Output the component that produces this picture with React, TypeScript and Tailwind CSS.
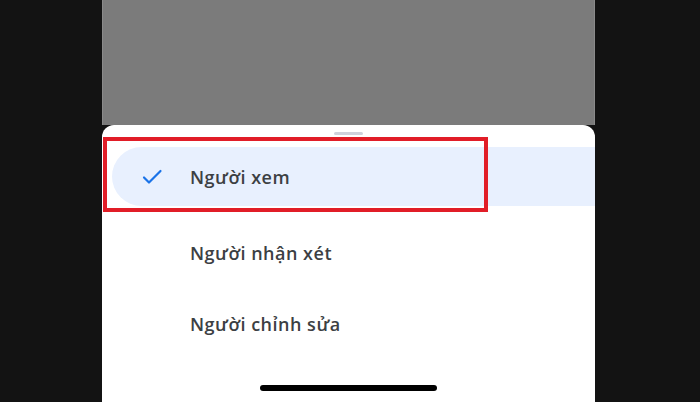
import React from "react";

const roles = [
  { label: "Người xem", selected: true },
  { label: "Người nhận xét", selected: false },
  { label: "Người chỉnh sửa", selected: false },
];

const Check = () => (
  <svg width="24" height="24" viewBox="0 0 24 24" fill="none">
    <path d="M4 12.5l5 5L20.5 6" stroke="#1a73e8" strokeWidth="2.2" strokeLinecap="round" strokeLinejoin="round" />
  </svg>
);

export default function App() {
  return (
    <div className="w-[700px] h-[402px] bg-[#131313] flex pl-[102px] font-['Open_Sans',sans-serif] overflow-hidden">
      <div className="relative w-[493px] h-full flex flex-col">
        {/* dimmed document behind the sheet */}
        <div className="h-[125px] bg-[#7b7b7b] border-x border-[#8a8a8a]" />

        {/* bottom sheet */}
        <div className="flex-1 bg-white rounded-t-[12px] flex flex-col">
          <div className="flex justify-center pt-[7px]">
            <div className="w-[29px] h-[3px] rounded-full bg-[#cfd2dc]" />
          </div>

          <div className="flex flex-col mt-[12px]">
            {roles.map((r, i) => (
              <div
                key={r.label}
                className={
                  r.selected
                    ? "ml-[10px] h-[59px] rounded-l-full bg-[#e8f0fe] flex items-center"
                    : i === 1
                      ? "ml-[10px] h-[71px] flex items-center mt-[11px]"
                      : "ml-[10px] h-[71px] flex items-center"
                }
              >
                <div className="w-[78px] flex justify-center pl-[2px]">{r.selected && <Check />}</div>
                <span className="text-[18px] font-semibold text-[#3c4043] tracking-[0.5px] pt-[1px]">{r.label}</span>
              </div>
            ))}
          </div>

          <div className="mt-auto mb-[11px] flex justify-center">
            <div className="w-[177px] h-[6px] rounded-full bg-black" />
          </div>
        </div>

        {/* red annotation frame */}
        <div className="absolute left-[1px] top-[137px] w-[385px] h-[75px] border-[4px] border-[#e11d27]" />
      </div>
    </div>
  );
}
